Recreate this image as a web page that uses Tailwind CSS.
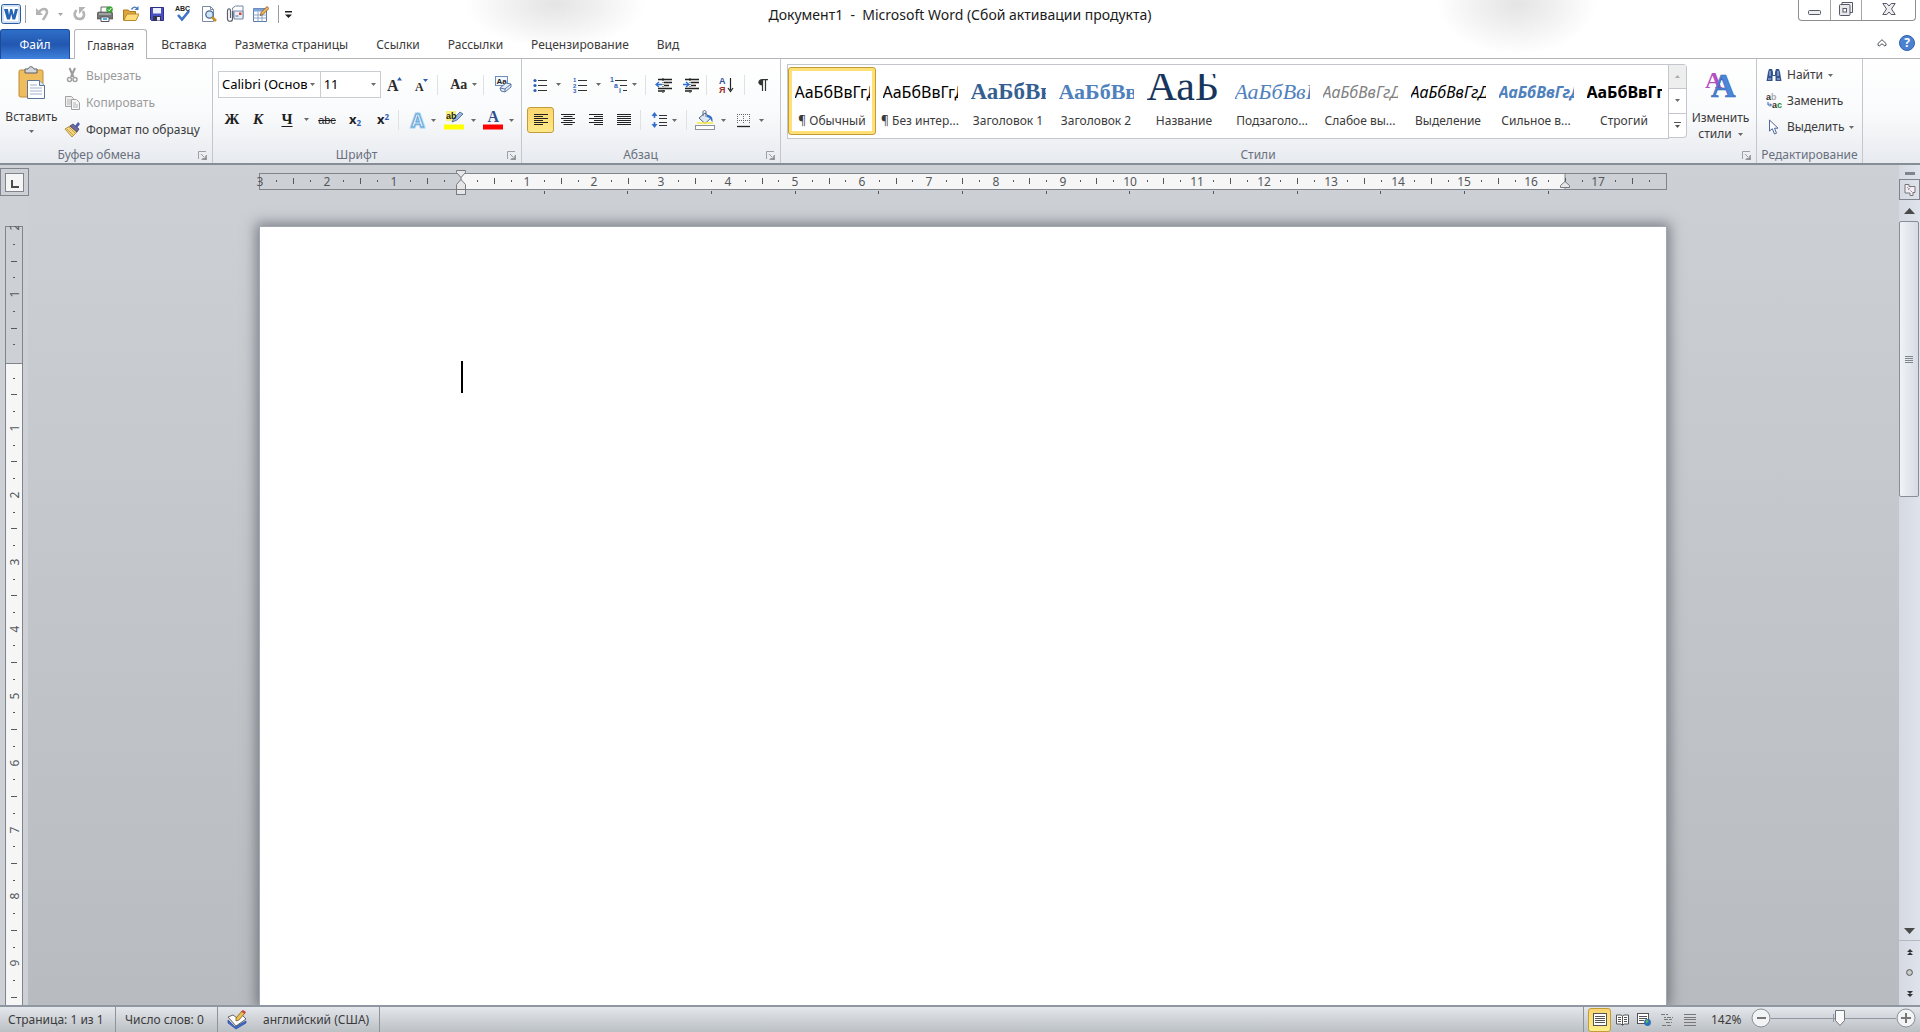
<!DOCTYPE html>
<html lang="ru">
<head>
<meta charset="utf-8">
<title>Документ1 - Microsoft Word</title>
<script src="https://cdn.jsdelivr.net/npm/@tailwindcss/browser@4"></script>
</head>
<body class="flex h-screen flex-col overflow-hidden bg-white font-['Noto_Sans','Open_Sans',sans-serif] text-xs text-[#3b3b3b]">

<svg class="hidden">
  <symbol id="arrow" viewBox="0 0 5 3"><path d="M0 0h5L2.500 3z" fill="#6b6b6b"/></symbol>
  <symbol id="launcher" viewBox="0 0 9 9"><path d="M0.500 8V0.500H8" fill="none" stroke="#a0a0a0"/><path d="M3 3l3 3M8.500 4v5H4V8l3-1z" fill="#8d8d8d" stroke="#9a9a9a"/></symbol>
</svg>

<header class="shrink-0 bg-[radial-gradient(ellipse_90px_44px_at_555px_4px,#e3e4e3,#f0f1f0_50%,transparent),radial-gradient(ellipse_80px_50px_at_79%_4px,#e3e4e3,#f0f1f0_50%,transparent)]">
  <div class="grid h-7 grid-cols-[1fr_auto_1fr]">
    <div class="flex items-center">
      <svg class="ml-px size-5" viewBox="0 0 20 20"><rect x=".5" y=".5" width="19" height="19" rx="2" fill="#e8f0fa" stroke="#2a5ca5"/><rect x="2" y="2" width="16" height="16" fill="#fff" stroke="#b5cbe8"/><path d="M3 5h4l1 6 1.200-6h2l1.500 6 1.200-6H17l-2.800 10.500h-2.700L10.300 10 9 15.500H6z" fill="#2463b5"/></svg>
      <span class="mx-1 h-[18px] w-px bg-[#9a9a9a]"></span>
      <button class="flex h-6 w-6 items-center justify-center" aria-label="Отменить"><svg class="h-[14px] w-[13px]" viewBox="0 0 13 14"><path d="M3 5c3-4 8-4 8 0 0 3-2 4-4 8" fill="none" stroke="#b4b4b4" stroke-width="2.600"/><path d="M0 1v7h7z" fill="#b4b4b4"/></svg></button>
      <button class="flex h-6 w-3 items-center justify-center" aria-label="Список отмены"><svg class="h-[3px] w-[5px] opacity-60"><use href="#arrow"/></svg></button>
      <button class="flex h-6 w-[26px] items-center justify-center" aria-label="Повторить"><svg class="h-[14px] w-[13px]" viewBox="0 0 13 14"><path d="M3.500 3C0 7 2 12 6.500 12S12 8 10 4" fill="none" stroke="#b4b4b4" stroke-width="2.600"/><path d="M6 0h6.500L6 7z" fill="#b4b4b4"/></svg></button>
      <button class="flex h-6 w-[26px] items-center justify-center" aria-label="Печать"><svg class="size-4" viewBox="0 0 16 16"><path d="M4 1h7v6H4z" fill="#fff" stroke="#666"/><path d="M1 6h14l1 2v5H0V8z" fill="#777" stroke="#444" stroke-width=".6"/><path d="M2 8h12" stroke="#ccc"/><path d="M4 11h8v4.500H4z" fill="#fff" stroke="#556"/><path d="M6 13h4" stroke="#49b0e0" stroke-width="2"/><circle cx="12.500" cy="3.500" r="3.300" fill="#3aa536"/><path d="M11 3.500l1.200 1.300L14.300 2" fill="none" stroke="#fff"/></svg></button>
      <button class="flex h-6 w-[26px] items-center justify-center" aria-label="Открыть"><svg class="size-4" viewBox="0 0 16 16"><path d="M0.500 14V4h5l1 1.500h6V14z" fill="#e0a53a" stroke="#a87820"/><path d="M.8 14.500L4 8h12l-3 6.500z" fill="#ffdc7c" stroke="#b98a2c"/><path d="M8.500 3.500c2-3 4-3 5.500-1" fill="none" stroke="#4677b8" stroke-width="1.400"/><path d="M15.500 0v4h-4z" fill="#4677b8"/></svg></button>
      <button class="flex h-6 w-[26px] items-center justify-center" aria-label="Сохранить"><svg class="size-4" viewBox="0 0 16 16"><path d="M1.500 1.500h13v13h-12l-1-1z" fill="#4a4fc4" stroke="#2c2f86"/><path d="M4 2h8v5.500H4z" fill="#eef1fb"/><path d="M4 10h8v4.500H4z" fill="#34364f"/><path d="M8 11h3v3.500H8z" fill="#e9e9ef"/></svg></button>
      <button class="flex h-6 w-[26px] items-center justify-center" aria-label="Орфография"><svg class="size-[18px]" viewBox="0 0 18 18"><text x="1" y="6" font-family="Liberation Sans" font-size="7" font-weight="700" fill="#222">ABC</text><path d="M4 10l4 4.500L15 6" fill="none" stroke="#3f73c6" stroke-width="2.600"/></svg></button>
      <button class="flex h-6 w-[26px] items-center justify-center" aria-label="Предварительный просмотр"><svg class="size-4" viewBox="0 0 16 16"><path d="M1.500 .5h8l3 3v12h-11z" fill="#fff" stroke="#7a8aa3"/><path d="M9.500 .5v3h3" fill="none" stroke="#7a8aa3"/><circle cx="8.500" cy="8.500" r="3.700" fill="#cfe4f7" stroke="#4a6a90" stroke-width="1.300"/><path d="M11 11l4 4" stroke="#c9902e" stroke-width="2.600"/></svg></button>
      <button class="flex h-6 w-[26px] items-center justify-center" aria-label="Отправить вложением"><svg class="size-[18px]" viewBox="0 0 18 18"><path d="M6.500 3l3-2h7.500v12h-9z" fill="#fff" stroke="#7486a5"/><path d="M8 6h9v8H8z" fill="#e8effa" stroke="#7486a5"/><path d="M13 7.500h2.500V10H13z" fill="#d9452e"/><path d="M9.500 11h3" stroke="#4a6a90"/><path d="M6.500 6v8c0 3-5 3-5 0V6c0-3 3-3 3 0v7" fill="none" stroke="#5a5f6c" stroke-width="1.200"/></svg></button>
      <button class="flex h-6 w-[26px] items-center justify-center" aria-label="Нарисовать таблицу"><svg class="size-4" viewBox="0 0 16 16"><path d="M.5 2.500h13v13H.5z" fill="#fff" stroke="#5979ad"/><path d="M.5 2.500h13v3H.5z" fill="#7fa3d6"/><path d="M.5 9h13M.5 12h13M5 5.500v10M9 5.500v10" stroke="#8aa5cc"/><path d="M7.500 9.500l.5-3L14 .5l2 2-6 6z" fill="#e9b85a" stroke="#7d4a2a" stroke-width=".8"/></svg></button>
      <span class="mx-1 h-[18px] w-px bg-[#9a9a9a]"></span>
      <button class="flex h-6 w-[11px] items-center justify-center" aria-label="Настройка панели"><svg class="h-[7px] w-[7px]" viewBox="0 0 7 7"><path d="M0 0h7v1.400H0zM0 3.500h7L3.500 7z" fill="#222"/></svg></button>
    </div>
    <h1 class="pt-[5px] text-sm leading-5 whitespace-pre text-[#1b1b1b]">Документ1  -  Microsoft Word (Сбой активации продукта)</h1>
    <div class="flex justify-end pr-1">
      <div class="flex h-[21px] divide-x divide-[#a5a5a5] rounded-b border border-t-0 border-[#8e8e8e] bg-white">
        <button class="flex w-8 items-center justify-center" aria-label="Свернуть"><svg class="mt-1 h-[5px] w-[13px]" viewBox="0 0 13 5"><rect x=".5" y=".5" width="12" height="4" rx="1" fill="#eee" stroke="#565869"/></svg></button>
        <button class="flex w-[31px] items-center justify-center" aria-label="Развернуть"><svg class="-mt-0.5 size-[14px]" viewBox="0 0 14 14"><path d="M3 2.500V.5h10.500v10H11" fill="#f4f4f4" stroke="#565869"/><rect x=".5" y="2.500" width="10.500" height="11" rx="1" fill="#e8e8ea" stroke="#565869"/><rect x="4" y="6.500" width="3.500" height="3.500" fill="#fff" stroke="#565869"/></svg></button>
        <button class="flex w-[53px] items-center justify-center" aria-label="Закрыть"><svg class="-mt-0.5 h-3 w-[14px]" viewBox="0 0 14 12"><path d="M.8 .5h4L7 3 9.200 .5h4L9.500 6l3.700 5.500h-4L7 9l-2.200 2.500h-4L4.500 6z" fill="#eee" stroke="#565869"/></svg></button>
      </div>
    </div>
  </div>
  <nav class="flex h-[31px] items-end border-b border-[#b3b5b8]">
    <button class="-mb-px h-[30px] w-[70px] rounded-t-[3px] border border-b-0 border-[#1c4b9c] bg-linear-to-b from-[#2f6fc8] via-[#2257b0] to-[#3f82dd] text-center text-white">Файл</button>
    <a href="#" class="-mb-px ml-1 h-[30px] rounded-t-[3px] border border-b-0 border-[#b3b5b8] bg-white px-3 leading-[31px]">Главная</a>
    <a href="#" class="h-[30px] px-[14px] leading-[33px]">Вставка</a>
    <a href="#" class="h-[30px] px-[14px] leading-[33px]">Разметка страницы</a>
    <a href="#" class="h-[30px] px-[14px] leading-[33px]">Ссылки</a>
    <a href="#" class="h-[30px] px-[14px] leading-[33px]">Рассылки</a>
    <a href="#" class="h-[30px] px-[14px] leading-[33px]">Рецензирование</a>
    <a href="#" class="h-[30px] px-[14px] leading-[33px]">Вид</a>
    <div class="ml-auto flex h-[30px] items-center gap-3 pr-[5px]">
      <button aria-label="Свернуть ленту"><svg class="h-2 w-[10px]" viewBox="0 0 10 8"><path d="M5 .7L9 4.500v1.800L7.800 7 5 4.800 2.200 7 1 6.300V4.500z" fill="#fff" stroke="#4e5258"/></svg></button>
      <button class="flex size-4 items-center justify-center rounded-full border border-[#2d5fb4] bg-[#4c80d0] text-xs font-bold text-white" aria-label="Справка">?</button>
    </div>
  </nav>
</header>

<section class="flex h-[106px] shrink-0 border-b-2 border-[#878d95] bg-linear-to-b from-white via-[#fafbfc] to-[#e7eaef]" aria-label="Лента">
  <div class="flex w-[213px] shrink-0 flex-col border-r border-[#c3c7cd]">
    <div class="flex h-[86px] pt-[3px]">
      <button class="flex w-[63px] flex-col items-center pt-1">
        <svg class="h-[34px] w-7" viewBox="0 0 28 34"><rect x="1" y="4" width="24" height="27" rx="1.500" fill="#f0bd5e" stroke="#c08c34"/><path d="M7 3h3c1-3 5-3 6 0h3v4H7z" fill="#d5d8dc" stroke="#5b6068"/><path d="M9.500 14.500h12l5 5v13h-17z" fill="#fff" stroke="#5d7598"/><path d="M21.500 14.500v5h5" fill="#dce6f3" stroke="#5d7598"/><path d="M12 19h7M12 22h12M12 25h12M12 28h12" stroke="#9fb3cf"/></svg>
        <span class="mt-[9px] leading-4">Вставить</span>
        <svg class="mt-[5px] h-[3px] w-[5px]"><use href="#arrow"/></svg>
      </button>
      <div class="flex flex-col">
        <button class="flex h-[27px] items-center gap-[5px] px-[1px] text-[#9b9b9b]"><svg class="size-[17px]" viewBox="0 0 17 17"><path d="M5.500 1l4 9M11 1L7 10" stroke="#9b9b9b" stroke-width="2"/><circle cx="5.500" cy="12.500" r="2" fill="none" stroke="#a2a2a2" stroke-width="1.500"/><circle cx="11" cy="12.500" r="2" fill="none" stroke="#a2a2a2" stroke-width="1.500"/></svg>Вырезать</button>
        <button class="flex h-[27px] items-center gap-[5px] px-[1px] text-[#9b9b9b]"><svg class="size-[17px]" viewBox="0 0 17 17"><path d="M1.500 2.500h6l2 2v8h-8z" fill="#eee" stroke="#a2a2a2"/><path d="M3 6h5M3 8h5M3 10h5" stroke="#b5b5b5"/><path d="M7.500 5.500h5l3 3v7h-8z" fill="#f6f6f6" stroke="#a2a2a2"/><path d="M9 9h3M9 11h5M9 13h5" stroke="#b5b5b5"/></svg>Копировать</button>
        <button class="flex h-[27px] items-center gap-[5px] px-[1px] whitespace-nowrap"><svg class="size-[17px]" viewBox="0 0 17 17"><path d="M1 8l5-3 7 6-5 5z" fill="#f5d67c" stroke="#9c7a2c" stroke-width=".8"/><path d="M3 8l6 6M5 6l6 6" stroke="#c4a04a"/><path d="M6 5l3-2 6 5-2 3z" fill="#6e6d9c" stroke="#41406e" stroke-width=".8"/><path d="M11 5l3-4 2 2-3 4z" fill="#4b60a8"/></svg>Формат по образцу</button>
      </div>
    </div>
    <div class="flex h-[18px] items-center pt-0.5 pr-[5px] text-[#69707d]"><span class="flex-1 text-center">Буфер обмена</span><button aria-label="Буфер обмена: параметры"><svg class="size-[9px]"><use href="#launcher"/></svg></button></div>
  </div>

  <div class="flex w-[309px] shrink-0 flex-col border-r border-[#c3c7cd]">
    <div class="flex h-[86px] flex-col gap-[9px] pt-3 pl-[5px]">
      <div class="flex h-[27px] items-center">
        <label class="relative block h-[27px] w-[103px]"><select aria-label="Шрифт" class="h-[27px] w-full appearance-none border border-[#c9ccd1] bg-white pr-3 pl-[3px] text-[13px] text-black"><option>Calibri (Основ</option></select><svg class="absolute top-3 right-[6px] h-[3px] w-[5px]"><use href="#arrow"/></svg></label>
        <label class="relative -ml-px block h-[27px] w-[62px]"><select aria-label="Размер шрифта" class="h-[27px] w-full appearance-none border border-[#c9ccd1] bg-white pl-[3px] text-[13px] text-black"><option>11</option></select><svg class="absolute top-3 right-[5px] h-[3px] w-[5px]"><use href="#arrow"/></svg></label>
        <button class="flex w-[26px] items-center justify-center" aria-label="Увеличить размер"><svg class="size-4" viewBox="0 0 16 16"><text x="1" y="14" font-family="Liberation Serif" font-weight="700" font-size="16" fill="#2b2b2b">A</text><path d="M11 3.500h5L13.500 0z" fill="#2f5fb5"/></svg></button>
        <button class="flex w-[26px] items-center justify-center" aria-label="Уменьшить размер"><svg class="size-4" viewBox="0 0 16 16"><text x="3" y="14" font-family="Liberation Serif" font-weight="700" font-size="12" fill="#2b2b2b">A</text><path d="M11 2h5l-2.500 3z" fill="#2f5fb5"/></svg></button>
        <span class="mx-1 h-5 w-px bg-[#dfe1e4]"></span>
        <button class="flex w-10 items-center gap-[5px] pl-2" aria-label="Регистр"><span class="font-['Liberation_Serif',serif] text-sm font-bold text-[#2b2b2b]">Aa</span><svg class="h-[3px] w-[5px]"><use href="#arrow"/></svg></button>
        <span class="mx-px h-5 w-px bg-[#dfe1e4]"></span>
        <button class="flex w-9 items-center justify-center" aria-label="Очистить формат"><svg class="size-[17px]" viewBox="0 0 17 17"><rect x=".5" y=".5" width="12" height="9" fill="#f4f8ff" stroke="#6c8cba"/><text x="1.500" y="8" font-family="Liberation Sans" font-weight="700" font-size="8" fill="#222">Aa</text><path d="M5 12l6-5 5 1v3l-6 5-4-1z" fill="#e4ecf8" stroke="#5a76a6"/><path d="M5 12l5 1 6-5M10 13v3" fill="none" stroke="#5a76a6"/></svg></button>
      </div>
      <div class="flex h-[26px] items-center font-['Liberation_Serif',serif] text-[15px] font-bold text-[#1e1e1e]">
        <button class="w-7 text-center">Ж</button>
        <button class="w-6 text-center italic">К</button>
        <button class="flex w-[43px] items-center gap-[7px] pl-[7px]"><span class="w-5 text-center underline underline-offset-2">Ч</span><svg class="h-[3px] w-[5px]"><use href="#arrow"/></svg></button>
        <button class="w-7 text-center font-['Liberation_Sans',sans-serif] text-[11px] font-normal line-through">abc</button>
        <button class="w-7 text-center font-['Open_Sans',sans-serif] text-[13px]" aria-label="Подстрочный">x<sub class="text-[8px] text-[#2f5fb5]">2</sub></button>
        <button class="w-7 text-center font-['Open_Sans',sans-serif] text-[13px]" aria-label="Надстрочный">x<sup class="text-[8px] text-[#2f5fb5]">2</sup></button>
        <span class="mx-px h-5 w-px bg-[#dfe1e4]"></span>
        <button class="flex w-[38px] items-center gap-[3px] pl-2" aria-label="Текстовые эффекты"><svg class="size-5" viewBox="0 0 20 20"><text x="3" y="17" font-family="Liberation Sans" font-weight="700" font-size="18" fill="#fff" stroke="#a9d4f3" stroke-width="3" paint-order="stroke">A</text><text x="3" y="17" font-family="Liberation Sans" font-weight="700" font-size="18" fill="#eef7ff" stroke="#5e9fd4" stroke-width="1">A</text></svg><svg class="h-[3px] w-[5px]"><use href="#arrow"/></svg></button>
        <button class="flex w-10 items-center gap-[7px] pl-[6px]" aria-label="Цвет выделения"><svg class="size-5" viewBox="0 0 20 20"><rect x="2" y="1" width="10" height="10" fill="#f7f27c"/><path d="M8 12l2-4 6-6 3 2-6 6z" fill="#9db8e0" stroke="#3e5a8c" stroke-width=".8"/><text x="2" y="9" font-family="Liberation Sans" font-size="9" font-weight="700" fill="#222">ab</text><rect x="0" y="14.500" width="20" height="5" fill="#ff0"/></svg><svg class="h-[3px] w-[5px]"><use href="#arrow"/></svg></button>
        <button class="flex w-10 items-center gap-[6px] pl-[5px]" aria-label="Цвет текста"><svg class="size-5" viewBox="0 0 20 20"><text x="4.500" y="12" font-family="Liberation Serif" font-size="16" font-weight="700" fill="#2f4f8f">A</text><rect x="0" y="14.500" width="20" height="5" fill="#f00"/></svg><svg class="h-[3px] w-[5px]"><use href="#arrow"/></svg></button>
      </div>
    </div>
    <div class="flex h-[18px] items-center pt-0.5 pr-[5px] text-[#69707d]"><span class="flex-1 pr-[7px] text-center">Шрифт</span><button aria-label="Шрифт: параметры"><svg class="size-[9px]"><use href="#launcher"/></svg></button></div>
  </div>

  <div class="flex w-[259px] shrink-0 flex-col border-r border-[#c3c7cd]">
    <div class="flex h-[86px] flex-col gap-[9px] pt-3">
      <div class="flex h-[27px] items-center pl-px">
        <button class="flex w-[42px] items-center gap-[6px] pl-[7px]" aria-label="Маркеры"><svg class="size-5" viewBox="0 0 20 20"><path d="M8 5.500h9M8 10.500h9M8 15.500h9" stroke="#333"/><circle cx="5" cy="5.500" r="1.600" fill="#2f5fb5"/><circle cx="5" cy="10.500" r="1.600" fill="#2f5fb5"/><circle cx="5" cy="15.500" r="1.600" fill="#2f5fb5"/></svg><svg class="h-[3px] w-[5px]"><use href="#arrow"/></svg></button>
        <button class="flex w-[38px] items-center gap-[6px] pl-[5px]" aria-label="Нумерация"><svg class="size-5" viewBox="0 0 20 20"><path d="M8 5.500h9M8 10.500h9M8 15.500h9" stroke="#333"/><g font-family="Liberation Sans" font-weight="700" font-size="6" fill="#2f5fb5"><text x="3" y="7">1</text><text x="3" y="12.500">2</text><text x="3" y="18">3</text></g></svg><svg class="h-[3px] w-[5px]"><use href="#arrow"/></svg></button>
        <button class="flex w-10 items-center gap-[3px] pl-[6px]" aria-label="Многоуровневый список"><svg class="size-5" viewBox="0 0 20 20"><path d="M6 5.500h12M11 10.500h7M14 15.500h4" stroke="#333"/><g font-family="Liberation Sans" font-weight="700" font-size="7" fill="#2f5fb5"><text x="1" y="7">1</text><text x="5" y="13">a</text><text x="10" y="18">i</text></g></svg><svg class="h-[3px] w-[5px]"><use href="#arrow"/></svg></button>
        <span class="mx-0.5 h-5 w-px bg-[#dfe1e4]"></span>
        <button class="flex w-8 items-center justify-center" aria-label="Уменьшить отступ"><svg class="h-4 w-[18px]" viewBox="0 0 18 16"><path d="M3 2.500h14M9 5.500h8M9 8.500h5M3 11.500h14M3 14h7" stroke="#222" stroke-width="1.500"/><path d="M8 1v15" stroke="#222" stroke-dasharray="1 1"/><path d="M1 7.500h6M4 5L1 7.500 4 10" fill="none" stroke="#2f6fd0" stroke-width="1.400"/></svg></button>
        <button class="flex w-[22px] items-center justify-center" aria-label="Увеличить отступ"><svg class="h-4 w-[18px]" viewBox="0 0 18 16"><path d="M3 2.500h14M9 5.500h8M9 8.500h5M3 11.500h14M3 14h7" stroke="#222" stroke-width="1.500"/><path d="M8 1v15" stroke="#222" stroke-dasharray="1 1"/><path d="M1 7.500h6M4 5l3 2.500L4 10" fill="none" stroke="#2f6fd0" stroke-width="1.400"/></svg></button>
        <span class="mx-1 h-5 w-px bg-[#dfe1e4]"></span>
        <button class="flex w-[30px] items-center justify-center" aria-label="Сортировка"><svg class="size-4" viewBox="0 0 16 16"><g font-family="Liberation Sans" font-weight="700" font-size="9"><text x="1" y="7" fill="#2f4f9f">A</text><text x="1" y="15.500" fill="#98302c">Я</text></g><path d="M12.500 1v12M10 11l2.500 3.500L15 11" fill="none" stroke="#222" stroke-width="1.200"/></svg></button>
        <span class="mx-[3px] h-5 w-px bg-[#dfe1e4]"></span>
        <button class="flex w-[30px] items-center justify-center" aria-label="Знаки абзаца"><svg class="h-3 w-[10px]" viewBox="0 0 10 12"><path d="M4.500 12V.6H10M7.500 12V.6" fill="none" stroke="#333" stroke-width="1.200"/><path d="M4.500 0C-1 0-1 6.500 4.500 6.500z" fill="#333"/></svg></button>
      </div>
      <div class="flex h-[26px] items-center pl-[5px]">
        <button class="flex h-[26px] w-[27px] items-center justify-center rounded-[3px] border border-[#c29b3b] bg-linear-to-b from-[#fbd66f] to-[#fee889]" aria-label="По левому краю"><svg class="h-3 w-[14px]" viewBox="0 0 14 12"><path d="M0 .5h14M0 2.500h9M0 4.500h14M0 6.500h9M0 8.500h14M0 10.500h9" stroke="#222"/></svg></button>
        <button class="flex w-7 items-center justify-center" aria-label="По центру"><svg class="h-3 w-[14px]" viewBox="0 0 14 12"><path d="M0 .5h14M2.500 2.500h9M0 4.500h14M2.500 6.500h9M0 8.500h14M2.500 10.500h9" stroke="#222"/></svg></button>
        <button class="flex w-7 items-center justify-center" aria-label="По правому краю"><svg class="h-3 w-[14px]" viewBox="0 0 14 12"><path d="M0 .5h14M5 2.500h9M0 4.500h14M5 6.500h9M0 8.500h14M5 10.500h9" stroke="#222"/></svg></button>
        <button class="flex w-[27px] items-center justify-center" aria-label="По ширине"><svg class="h-3 w-[14px]" viewBox="0 0 14 12"><path d="M0 .5h14M0 2.500h14M0 4.500h14M0 6.500h14M0 8.500h14M0 10.500h14" stroke="#222"/></svg></button>
        <span class="mx-[3px] h-5 w-px bg-[#dfe1e4]"></span>
        <button class="flex w-[42px] items-center gap-[2px] pl-[6px]" aria-label="Интервал"><svg class="size-5" viewBox="0 0 20 20"><path d="M9 5.500h8M9 8.500h8M9 12.500h8M9 15.500h8" stroke="#333"/><path d="M4.500 4v4M4.500 12v4" stroke="#2f6fd0" stroke-width="1.600"/><path d="M4.500 2L7.500 6h-6zM4.500 18l3-4h-6z" fill="#2f6fd0"/></svg><svg class="h-[3px] w-[5px]"><use href="#arrow"/></svg></button>
        <span class="mr-px h-5 w-px bg-[#dfe1e4]"></span>
        <button class="flex w-[42px] items-center gap-[6px] pl-[7px]" aria-label="Заливка"><svg class="size-5" viewBox="0 0 20 20"><path d="M4 8l6-5 6 5-6 5.500z" fill="#dfe7f3" stroke="#556987"/><path d="M8 6V2c0-2 3-2 3 0v5" fill="none" stroke="#556987"/><path d="M12 5c4 0 6 2 5.500 7-1.500-1-1.500-4-5.500-5z" fill="#2f6fd0"/><path d="M2 13h16" stroke="#f5ee3a" stroke-width="1.500"/><rect x=".5" y="15.500" width="19" height="4" fill="#fff" stroke="#8d929b"/></svg><svg class="h-[3px] w-[5px]"><use href="#arrow"/></svg></button>
        <button class="flex w-10 items-center gap-[5px] pl-1" aria-label="Границы"><svg class="size-5" viewBox="0 0 20 20"><path d="M3.500 4v10M9.500 4v10M15.500 4v10M3 4.500h13M3 10.500h13" stroke="#666" stroke-dasharray="1 1"/><path d="M3 16.500h13" stroke="#222" stroke-width="1.300"/></svg><svg class="h-[3px] w-[5px]"><use href="#arrow"/></svg></button>
      </div>
    </div>
    <div class="flex h-[18px] items-center pt-0.5 pr-[5px] text-[#69707d]"><span class="flex-1 pr-[7px] text-center">Абзац</span><button aria-label="Абзац: параметры"><svg class="size-[9px]"><use href="#launcher"/></svg></button></div>
  </div>

  <div class="flex w-[976px] shrink-0 flex-col border-r border-[#c3c7cd]">
    <div class="flex h-[86px] pt-[5px] pl-[6px]">
      <div class="flex h-[75px] w-[882px] items-start border border-[#c3c7cd] bg-white pt-0.5 text-black">
        <button class="flex h-[68px] w-22 flex-col items-center rounded-[3px] border border-[#c29b3b] bg-[#ffe077] p-[3px]"><span class="flex w-full flex-1 flex-col items-center bg-white"><span class="h-[42px] w-[75px] overflow-hidden text-left text-base leading-[42px] whitespace-nowrap">АаБбВвГгДд</span><span class="leading-4 text-[#3b3b3b]">¶ Обычный</span></span></button>
        <button class="flex w-22 flex-col items-center pt-1"><span class="h-[42px] w-[75px] overflow-hidden text-left text-base leading-[42px] whitespace-nowrap">АаБбВвГгДд</span><span class="leading-4 whitespace-nowrap text-[#3b3b3b]">¶ Без интер...</span></button>
        <button class="flex w-22 flex-col items-center pt-1"><span class="h-[42px] w-[75px] overflow-hidden text-left font-['Liberation_Serif',serif] text-[23px] leading-[42px] font-bold whitespace-nowrap text-[#365f91]">АаБбВв</span><span class="leading-4 text-[#3b3b3b]">Заголовок 1</span></button>
        <button class="flex w-22 flex-col items-center pt-1"><span class="h-[42px] w-[75px] overflow-hidden text-left font-['Liberation_Serif',serif] text-[22px] leading-[42px] font-bold whitespace-nowrap text-[#4f81bd]">АаБбВв</span><span class="leading-4 text-[#3b3b3b]">Заголовок 2</span></button>
        <button class="flex w-22 flex-col items-center pt-[7px]"><span class="h-[39px] w-[75px] overflow-hidden text-left font-['Liberation_Serif',serif] text-[42px] leading-[24px] whitespace-nowrap text-[#17365d]">АаБ</span><span class="leading-4 text-[#3b3b3b]">Название</span></button>
        <button class="flex w-22 flex-col items-center pt-1"><span class="h-[42px] w-[75px] overflow-hidden text-left font-['Liberation_Serif',serif] text-[22px] leading-[42px] whitespace-nowrap text-[#4f81bd] italic">АаБбВвГг</span><span class="leading-4 text-[#3b3b3b]">Подзаголо...</span></button>
        <button class="flex w-22 flex-col items-center pt-1"><span class="h-[42px] w-[75px] overflow-hidden text-left text-base leading-[42px] whitespace-nowrap text-[#808080] italic">АаБбВвГгДд</span><span class="leading-4 whitespace-nowrap text-[#3b3b3b]">Слабое вы...</span></button>
        <button class="flex w-22 flex-col items-center pt-1"><span class="h-[42px] w-[75px] overflow-hidden text-left text-base leading-[42px] whitespace-nowrap italic">АаБбВвГгДд</span><span class="leading-4 text-[#3b3b3b]">Выделение</span></button>
        <button class="flex w-22 flex-col items-center pt-1"><span class="h-[42px] w-[75px] overflow-hidden text-left text-base leading-[42px] font-bold whitespace-nowrap text-[#4f81bd] italic">АаБбВвГгДд</span><span class="leading-4 whitespace-nowrap text-[#3b3b3b]">Сильное в...</span></button>
        <button class="flex w-22 flex-col items-center pt-1"><span class="h-[42px] w-[75px] overflow-hidden text-left text-base leading-[42px] font-bold whitespace-nowrap">АаБбВвГгДд</span><span class="leading-4 text-[#3b3b3b]">Строгий</span></button>
      </div>
      <div class="flex h-[74px] w-[18px] flex-col divide-y divide-[#c3c7cd] rounded-r-sm border border-l-0 border-[#c3c7cd] bg-white">
        <button class="flex flex-1 items-center justify-center bg-[#eeeeee]" aria-label="Вверх"><svg class="h-[3px] w-[5px] rotate-180 opacity-50"><use href="#arrow"/></svg></button>
        <button class="flex flex-1 items-center justify-center" aria-label="Вниз"><svg class="h-[3px] w-[5px]"><use href="#arrow"/></svg></button>
        <button class="flex flex-1 items-center justify-center" aria-label="Все стили"><svg class="h-[6px] w-[7px]" viewBox="0 0 7 6"><path d="M0 0h7v1H0zM1 3h5L3.500 6z" fill="#555"/></svg></button>
      </div>
      <button class="flex flex-1 flex-col items-center pt-[5px] pr-0.5">
        <svg class="h-[30px] w-8" viewBox="0 0 32 30"><text x="0" y="19" font-family="Liberation Serif" font-weight="700" font-size="24" fill="#b44fc0">A</text><text x="6" y="28" font-family="Liberation Serif" font-weight="700" font-size="34" fill="#4d86d8" stroke="#2f5fb0" stroke-width=".6">A</text></svg>
        <span class="mt-[11px] leading-4">Изменить</span>
        <span class="flex items-center gap-[6px] leading-4">стили <svg class="h-[3px] w-[5px]"><use href="#arrow"/></svg></span>
      </button>
    </div>
    <div class="flex h-[18px] items-center pt-0.5 pr-[5px] text-[#69707d]"><span class="flex-1 pr-[7px] text-center">Стили</span><button aria-label="Стили: параметры"><svg class="size-[9px]"><use href="#launcher"/></svg></button></div>
  </div>

  <div class="flex w-[106px] shrink-0 flex-col border-r border-[#c3c7cd]">
    <div class="flex h-[86px] flex-col pt-[3px] pl-[9px]">
      <button class="flex h-[26px] items-center gap-[5px]"><svg class="size-4" viewBox="0 0 16 16"><path d="M2 5l1-3h3l1 3v3h2V5l1-3h3l1 3 1.500 9h-6V9H6.500v5h-6z" fill="#35548f"/><path d="M2 12h3M11 12h3M4 4v5M12 4v5" stroke="#b8cbe8"/></svg>Найти<svg class="h-[3px] w-[5px]"><use href="#arrow"/></svg></button>
      <button class="flex h-[26px] items-center gap-[5px]"><svg class="size-4" viewBox="0 0 16 16"><g font-family="Liberation Sans" font-weight="700" font-size="9"><text x="0" y="7" fill="#333">a</text><text x="5" y="7" fill="#aaa">b</text><text x="6" y="15" fill="#333">a</text><text x="11" y="15" fill="#1d8a28">c</text></g><path d="M2 9v3h3M4 10.500L5.500 12 4 13.500" fill="none" stroke="#2f5fb5"/></svg>Заменить</button>
      <button class="flex h-[26px] items-center gap-[5px]"><svg class="size-4" viewBox="0 0 16 16"><path d="M3.500 1v11l2.800-2.300L8.500 15l2-.8-2-5h3.500z" fill="#fff" stroke="#4f6a9a"/></svg>Выделить<svg class="h-[3px] w-[5px]"><use href="#arrow"/></svg></button>
    </div>
    <div class="h-[18px] pt-px text-center leading-[18px] text-[#69707d]">Редактирование</div>
  </div>
</section>

<main class="grid min-h-0 flex-1 grid-cols-[28px_1fr_21px] bg-linear-to-b from-[#cdd0d5] to-[#b8bbbf]">
  <div class="flex min-h-0 flex-col bg-[#cdd0d5]">
    <div class="h-[61px] shrink-0 pt-[3px]"><button class="flex h-7 w-[29px] items-center justify-center border border-[#80858d]" aria-label="Тип табуляции"><span class="flex size-[19px] items-center justify-center border border-[#80858d] bg-[#f5f5f6]"><span class="mt-1 size-2 border-b-2 border-l-2 border-[#4a4a4a]"></span></span></button></div>
    <svg id="vruler" class="min-h-0 w-full flex-1" font-size="12" fill="#55585d" aria-hidden="true"></svg>
  </div>
  <div class="flex min-h-0 flex-col items-center overflow-hidden pr-px">
    <svg id="hruler" class="h-[61px] w-[1420px] shrink-0" font-size="12" fill="#55585d" aria-hidden="true"></svg>
    <article class="w-[1408px] flex-1 border border-b-0 border-[#a2a8b0] bg-white pt-[134px] pl-[201px] shadow-[0_0_12px_3px_rgba(60,66,75,0.55)]">
      <div class="h-8 w-0.5 bg-black"></div>
    </article>
  </div>
  <div class="flex min-h-0 flex-col items-center bg-linear-to-r from-[#d4d9e2] to-[#dee3ec] pt-[7px] pb-px">
    <div class="h-[3px] w-[10px] shrink-0 bg-[#80858d]"></div>
    <button class="mt-1 flex h-[21px] w-full shrink-0 items-center justify-center border border-[#80858d]" aria-label="Линейка"><svg class="size-3" viewBox="0 0 12 12"><path d="M1 .5h4v2h6v6H9v3H6V9H1z" fill="#f5eef5" stroke="#777"/><path d="M3 3l6 6M4 6l3-3" stroke="#777" stroke-dasharray="1 1"/></svg></button>
    <button class="flex h-[21px] w-full shrink-0 items-center justify-center" aria-label="Прокрутить вверх"><svg class="h-[6px] w-[11px]" viewBox="0 0 11 6"><path d="M0 6L5.500 0 11 6z" fill="#4a4a4a"/></svg></button>
    <div class="flex h-[276px] w-5 shrink-0 flex-col items-center justify-center gap-px self-start rounded-xs border border-[#888d96] bg-linear-to-r from-[#f0f3f8] to-[#d6dbe4]"><i class="h-px w-2 bg-[#80858d]"></i><i class="h-px w-2 bg-[#80858d]"></i><i class="h-px w-2 bg-[#80858d]"></i><i class="h-px w-2 bg-[#80858d]"></i></div>
    <button class="mt-auto flex h-5 w-full shrink-0 items-center justify-center border-b border-[#b3b8c0]" aria-label="Прокрутить вниз"><svg class="h-[6px] w-[11px]" viewBox="0 0 11 6"><path d="M0 0h11L5.500 6z" fill="#4a4a4a"/></svg></button>
    <button class="flex h-[21px] shrink-0 items-center" aria-label="Предыдущая страница"><svg class="size-[6px]" viewBox="0 0 6 6"><path d="M3 0l3 3H0zM3 3l3 3H0z" fill="#333"/></svg></button>
    <button class="flex h-[21px] shrink-0 items-center" aria-label="Объект перехода"><svg class="size-[7px]" viewBox="0 0 7 7"><circle cx="3.500" cy="3.500" r="2.900" fill="#ccc" stroke="#555"/></svg></button>
    <button class="flex h-[21px] shrink-0 items-center" aria-label="Следующая страница"><svg class="size-[6px]" viewBox="0 0 6 6"><path d="M3 3L0 0h6zM3 6L0 3h6z" fill="#333"/></svg></button>
  </div>
</main>

<footer class="flex h-[27px] shrink-0 items-stretch border-t-2 border-[#8f97a2] bg-linear-to-b from-[#e4e7eb] to-[#bbc0c5] whitespace-nowrap">
  <span class="w-[116px] border-r border-[#8e939a] pl-2 leading-[25px]">Страница: 1 из 1</span>
  <span class="w-[102px] border-r border-[#8e939a] pl-[9px] leading-[25px]">Число слов: 0</span>
  <button class="flex w-[37px] items-center justify-center" aria-label="Проверка правописания"><svg class="size-5" viewBox="0 0 20 20"><path d="M1 10l7 7 11-6v2L9 19 1 13z" fill="#3c6bd0" stroke="#2b4a9a" stroke-width=".7"/><path d="M1 7l5-2 4 3 5-3 4 4-10 7z" fill="#fff" stroke="#444" stroke-width=".8"/><path d="M9 8l6-7 3 2-6 7-3 1z" fill="#ecc04f" stroke="#6a4a1a" stroke-width=".7"/><path d="M14 1.500l2-1.500 3 2-1.500 2z" fill="#c8463a"/></svg></button>
  <span class="w-[125px] border-r border-[#8e939a] pl-[8px] leading-[25px]">английский (США)</span>
  <div class="ml-auto flex items-center border-l border-[#8e939a] pl-1">
    <button class="flex h-6 w-[23px] items-center justify-center rounded-[3px] border border-[#c29b3b] bg-linear-to-b from-[#fbd66f] to-[#ffef8a]" aria-label="Разметка страницы"><svg class="h-[13px] w-[14px]" viewBox="0 0 14 13"><rect x=".5" y=".5" width="13" height="12" fill="#fff" stroke="#555"/><path d="M2 3.500h10M2 5.500h10M2 7.500h10M2 9.500h10" stroke="#555"/></svg></button>
    <button class="flex w-[22px] items-center justify-center" aria-label="Режим чтения"><svg class="h-3 w-[13px]" viewBox="0 0 13 12"><path d="M.5 1h4.500l1.500 1L8 1h4.500v9H8l-1.500 1.500L5 10H.5z" fill="#fff" stroke="#555"/><path d="M6.500 2v9M2 3.500h3M2 5.500h3M2 7.500h3M8 3.500h3M8 5.500h3M8 7.500h3" stroke="#555"/></svg></button>
    <button class="flex w-[22px] items-center justify-center" aria-label="Веб-документ"><svg class="h-[13px] w-[14px]" viewBox="0 0 14 13"><rect x=".5" y=".5" width="11" height="10" fill="#fff" stroke="#555"/><path d="M2 3.500h8M2 5.500h8M2 7.500h5" stroke="#555"/><circle cx="10.500" cy="9.500" r="3.400" fill="#2d6fb8"/><path d="M8.500 8l2-1.500 1 2-2 2z" fill="#5cb85c"/></svg></button>
    <button class="flex w-[23px] items-center justify-center" aria-label="Структура"><svg class="h-3 w-3" viewBox="0 0 12 12"><path d="M0 .5h7M3 3.500h2M6 3.500h6M3 5.500h8M5 8.500h6M1 11.500h9" stroke="#777" stroke-dasharray="4 1"/></svg></button>
    <button class="flex w-[23px] items-center justify-center" aria-label="Черновик"><svg class="h-3 w-3" viewBox="0 0 12 12"><path d="M0 .5h12M0 3.500h12M0 5.500h12M0 8.500h12M0 11.500h12" stroke="#777"/></svg></button>
    <span class="w-[50px] pl-[10px] text-left">142%</span>
    <button class="-mt-1 size-5 rounded-full" aria-label="Уменьшить масштаб"><svg viewBox="0 0 20 20"><circle cx="10" cy="10" r="9" fill="#f2f3f5" stroke="#8a8f97"/><path d="M6 10h9" stroke="#777" stroke-width="2"/></svg></button>
    <label class="relative -mt-1 block h-4 w-[125px]"><svg class="h-4 w-[125px]" viewBox="0 0 125 16"><path d="M0 8.500h125" stroke="#8f97a2"/><path d="M62.500 4v8" stroke="#8f97a2"/><path d="M64.500 .5h9v10l-4.500 5-4.500-5z" fill="#fafafa" stroke="#6f7781"/></svg><input type="range" min="10" max="500" value="142" aria-label="Масштаб" class="absolute inset-0 m-0 w-full opacity-0"></label>
    <button class="-mt-1 mr-1 size-5 rounded-full" aria-label="Увеличить масштаб"><svg viewBox="0 0 20 20"><circle cx="10" cy="10" r="9" fill="#f2f3f5" stroke="#8a8f97"/><path d="M5 10h10M10 5v10" stroke="#777" stroke-width="2"/></svg></button>
  </div>
</footer>

<script>
  const CM = 66.93;
  // Quarter-centimetre marks: numbers on whole units, a long tick on halves, a short one between.
  function marks(first, last, zero, draw) {
    for (let q = first; q <= last; q++) {
      if (q === 0) continue;
      const pos = Math.round(zero + q * CM / 4);
      draw(pos, q % 4 === 0 ? String(Math.abs(q / 4)) : '', q % 2 === 0 ? 6 : 2);
    }
  }
  let h = '<rect x="6.5" y="8.500" width="1407" height="16" fill="#cdd0d5" stroke="#80858d"/><rect x="208" y="8.500" width="1104" height="16" fill="#f6f6f7" stroke="#80858d"/>';
  marks(-12, 71, 207.500, (x, n, len) => {
    h += n ? `<text x="${x}" y="21" text-anchor="middle">${n}</text>` : `<rect x="${x}" y="${16 - len / 2}" width="1" height="${len}"/>`;
  });
  for (let i = 1; i < 14; i++) h += `<rect x="${Math.round(207 + i * CM * 1.25)}" y="26" width="1" height="3"/>`;
  h += '<g fill="#e6e6e6" stroke="#777b82"><path d="M203.500 5.500h9v2l-4.500 5-4.500-5z"/><path d="M203.500 24.500v-5l4.500-5 4.500 5v5z"/><rect x="203.500" y="24.500" width="9" height="5"/><path d="M1307.500 22.500v-2l4.500-4 4.500 4v2z"/></g>';
  document.getElementById('hruler').innerHTML = h;

  // The vertical ruler covers the visible window only: one full tick group per started centimetre.
  const v = document.getElementById('vruler');
  function drawVertical() {
    const height = v.getBoundingClientRect().height;
    let s = `<rect x="5.5" y=".5" width="17" height="${height}" fill="#cdd0d5" stroke="#80858d"/><rect x="5.5" y="137.500" width="17" height="${height}" fill="#f6f6f7" stroke="#80858d"/>`;
    marks(-8, Math.floor((height - 136) / CM * 4), 135, (y, n, len) => {
      s += n ? `<text transform="translate(19 ${y}) rotate(-90)" text-anchor="middle">${n}</text>` : `<rect x="${14 - len / 2}" y="${y}" width="${len}" height="1"/>`;
    });
    v.innerHTML = s;
  }
  new ResizeObserver(drawVertical).observe(v);
</script>
</body>
</html>
